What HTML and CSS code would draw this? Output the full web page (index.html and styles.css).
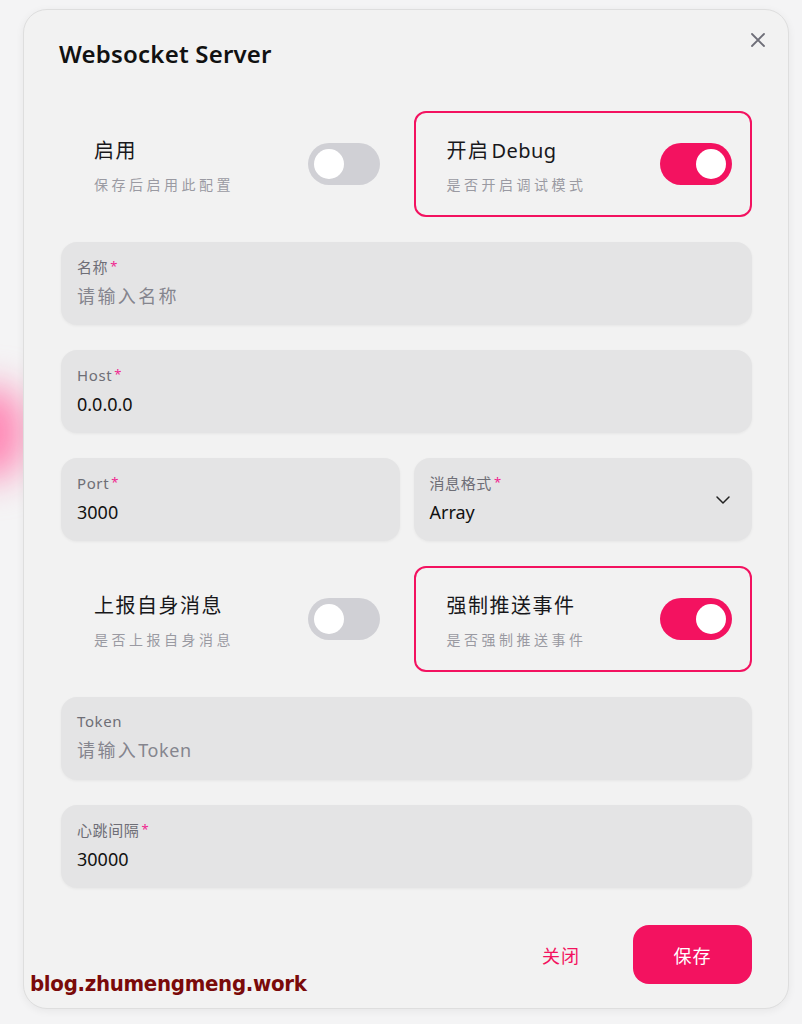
FILE: index.html
```html
<!DOCTYPE html>
<html lang="zh-CN">
<head>
<meta charset="utf-8">
<title>Websocket Server</title>
<link rel="stylesheet" href="styles.css">
</head>
<body>
<div class="glow"></div>
<div class="modal">
  <button class="close" aria-label="关闭">
    <svg width="16" height="16" viewBox="0 0 16 16"><path d="M2 2L14 14M14 2L2 14" stroke="#6e6e78" stroke-width="1.8" stroke-linecap="round" fill="none"/></svg>
  </button>
  <header class="modal-header">Websocket Server</header>
  <div class="modal-body">
    <div class="pair">
      <div class="switch-card">
        <div class="switch-text">
          <div class="switch-title">启用</div>
          <div class="switch-desc">保存后启用此配置</div>
        </div>
        <span class="toggle"><span class="knob"></span></span>
      </div>
      <div class="switch-card active">
        <div class="switch-text">
          <div class="switch-title">开启<span class="latin">Debug</span></div>
          <div class="switch-desc">是否开启调试模式</div>
        </div>
        <span class="toggle on"><span class="knob"></span></span>
      </div>
    </div>

    <div class="field">
      <div class="field-label">名称<span class="req">*</span></div>
      <div class="field-value placeholder">请输入名称</div>
    </div>

    <div class="field">
      <div class="field-label">Host<span class="req">*</span></div>
      <div class="field-value">0.0.0.0</div>
    </div>

    <div class="pair">
      <div class="field">
        <div class="field-label">Port<span class="req">*</span></div>
        <div class="field-value">3000</div>
      </div>
      <div class="field select">
        <div class="field-label">消息格式<span class="req">*</span></div>
        <div class="field-value">Array</div>
        <svg class="chevron" width="16" height="10" viewBox="0 0 16 10"><path d="M2 2L8 8L14 2" stroke="#222" stroke-width="1.5" fill="none" stroke-linecap="round" stroke-linejoin="round"/></svg>
      </div>
    </div>

    <div class="pair">
      <div class="switch-card">
        <div class="switch-text">
          <div class="switch-title">上报自身消息</div>
          <div class="switch-desc">是否上报自身消息</div>
        </div>
        <span class="toggle"><span class="knob"></span></span>
      </div>
      <div class="switch-card active">
        <div class="switch-text">
          <div class="switch-title">强制推送事件</div>
          <div class="switch-desc">是否强制推送事件</div>
        </div>
        <span class="toggle on"><span class="knob"></span></span>
      </div>
    </div>

    <div class="field">
      <div class="field-label">Token</div>
      <div class="field-value placeholder">请输入<span class="latin">Token</span></div>
    </div>

    <div class="field">
      <div class="field-label">心跳间隔<span class="req">*</span></div>
      <div class="field-value">30000</div>
    </div>
  </div>
  <footer class="modal-footer">
    <button class="btn-ghost">关闭</button>
    <button class="btn-primary">保存</button>
  </footer>
</div>
<div class="watermark">blog.zhumengmeng.work</div>
</body>
</html>
```
FILE: styles.css
```css
* { box-sizing: border-box; }
html, body { margin: 0; }
body {
  width: 802px;
  height: 1024px;
  overflow: hidden;
  background: #f4f4f5;
  font-family: "Noto Sans", "Noto Sans CJK SC", sans-serif;
  color: #18181b;
  position: relative;
  padding: 9px 13px 0 23px;
}
.glow {
  position: absolute;
  left: -40px;
  top: 385px;
  width: 66px;
  height: 95px;
  border-radius: 50%;
  background: #ff86b4;
  filter: blur(18px);
}
.modal {
  position: relative;
  width: 766px;
  height: 1000px;
  background: #f2f2f2;
  border: 1px solid #dedede;
  border-radius: 24px;
  box-shadow: 0 2px 8px rgba(0,0,0,0.06);
  padding: 28px 36px 0 35px;
}
.close {
  position: absolute;
  right: 16px;
  top: 16px;
  width: 28px;
  height: 28px;
  border: 0;
  background: transparent;
  padding: 0;
  display: flex;
  align-items: center;
  justify-content: center;
}
.modal-header {
  font-size: 24px;
  font-weight: 600;
  line-height: 32px;
  color: #111;
  letter-spacing: 0.2px;
}
.modal-body {
  margin-top: 41px;
  display: flex;
  flex-direction: column;
  gap: 25px;
  padding-left: 2px;
}
.pair {
  display: grid;
  grid-template-columns: 1fr 1fr;
  gap: 14px;
}
.switch-card {
  height: 106px;
  border: 2px solid transparent;
  border-radius: 12px;
  display: flex;
  align-items: center;
  justify-content: space-between;
  padding: 0 18px 0 31px;
}
.switch-card.active { border-color: #f31260; }
.switch-text { padding-top: 4px; }
.switch-title {
  font-size: 20px;
  line-height: 28px;
  color: #18181b;
  letter-spacing: 1.5px;
}
.switch-title .latin { letter-spacing: 0.4px; margin-left: 2px; }
.switch-desc {
  margin-top: 10px;
  font-size: 14px;
  line-height: 20px;
  color: #9a9aa2;
  letter-spacing: 3.5px;
}
.toggle {
  width: 72px;
  height: 42px;
  border-radius: 21px;
  background: #d0d0d5;
  display: flex;
  align-items: center;
  padding: 0 6px;
}
.toggle.on { background: #f31260; justify-content: flex-end; }
.knob {
  width: 30px;
  height: 30px;
  border-radius: 50%;
  background: #fff;
}
.field {
  position: relative;
  height: 83px;
  border-radius: 16px;
  background: #e4e4e5;
  box-shadow: 0 1px 3px rgba(0,0,0,0.05);
  padding: 14px 16px 0;
}
.field-label {
  font-size: 15px;
  line-height: 20px;
  color: #6e6e76;
  letter-spacing: 0.6px;
}
.req {
  color: #f0258f;
  font-size: 13px;
  margin-left: 2px;
  vertical-align: 2px;
}
.field-value {
  margin-top: 6px;
  font-size: 18px;
  line-height: 26px;
  color: #111;
}
.field-value.placeholder { color: #85858e; letter-spacing: 2.4px; }
.field-value.placeholder .latin { letter-spacing: 0.6px; }
.chevron {
  position: absolute;
  right: 21px;
  top: 37px;
}
.modal-footer {
  margin-top: 37px;
  display: flex;
  justify-content: flex-end;
  align-items: center;
  gap: 32px;
}
.btn-ghost, .btn-primary {
  font-family: "Noto Sans CJK SC", sans-serif;
  font-size: 18px;
  border: 0;
  height: 59px;
  border-radius: 16px;
  letter-spacing: 1px;
}
.btn-ghost {
  background: transparent;
  color: #f31260;
  width: 80px;
}
.btn-primary {
  background: #f31260;
  color: #fff;
  width: 119px;
}
.watermark {
  position: absolute;
  left: 30px;
  top: 971px;
  font-family: "DejaVu Sans Condensed", "DejaVu Sans", sans-serif;
  font-stretch: condensed;
  font-weight: 700;
  font-size: 22px;
  color: #7a0a0a;
  letter-spacing: -0.3px;
}
```
